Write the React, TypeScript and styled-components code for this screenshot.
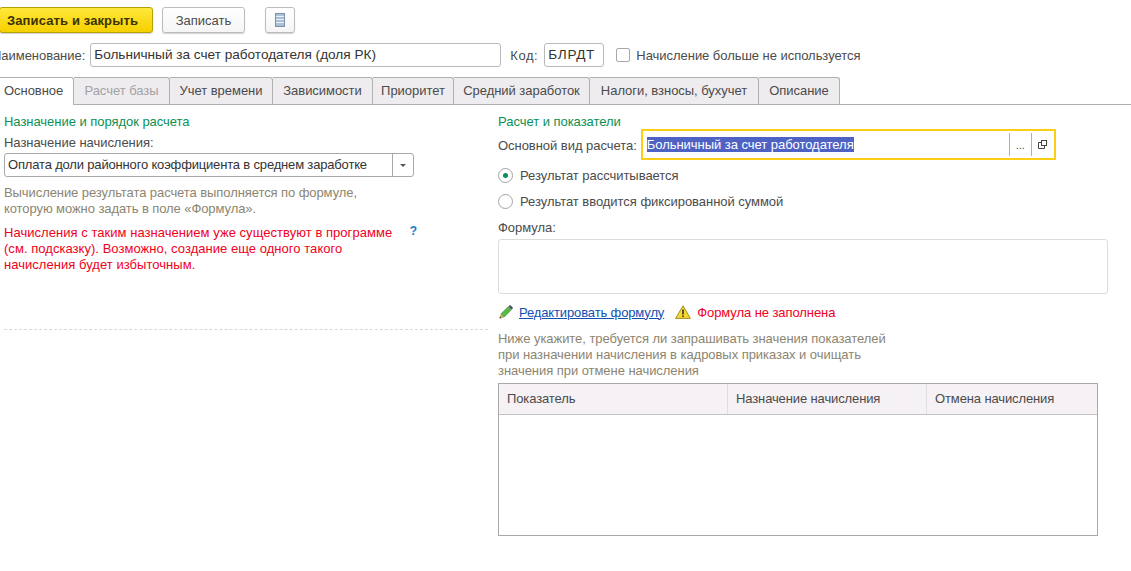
import React from 'react';
import styled, { createGlobalStyle } from 'styled-components';

const GlobalStyle = createGlobalStyle`
  html, body {
    margin: 0;
    padding: 0;
    background: #fff;
    overflow: hidden;
  }
  body {
    font-family: "Liberation Sans", Arial, sans-serif;
    font-size: 13px;
    letter-spacing: -0.04px;
    color: #4b4b4b;
  }
`;

const Page = styled.div`
  width: 1131px;
  height: 571px;
  overflow: hidden;
`;

const Toolbar = styled.div`
  display: flex;
  align-items: center;
  height: 26px;
  padding-top: 7px;
  margin-left: -1px;
`;

const Button = styled.button<{ $primary?: boolean }>`
  height: 26px;
  box-sizing: border-box;
  border-radius: 3px;
  font-family: inherit;
  font-size: 13px;
  padding: 0 ${(p) => (p.$primary ? '7px' : '0')} 0 0;
  letter-spacing: ${(p) => (p.$primary ? '0.12px' : '0')};
  color: ${(p) => (p.$primary ? '#3b3200' : '#4b4b4b')};
  font-weight: ${(p) => (p.$primary ? 'bold' : 'normal')};
  width: ${(p) => (p.$primary ? '154px' : '83px')};
  margin-right: ${(p) => (p.$primary ? '9px' : '20px')};
  border: 1px solid ${(p) => (p.$primary ? '#b8a000' : '#bcbcbc')};
  background: ${(p) =>
    p.$primary ? 'linear-gradient(#ffe83c, #f6d000)' : 'linear-gradient(#fff, #f5f5f5)'};
  box-shadow: 0 1px 1px rgba(0, 0, 0, 0.18);
`;

const IconButton = styled(Button)`
  width: 30px;
  margin: 0;
  display: flex;
  align-items: center;
  justify-content: center;
`;

const NameRow = styled.div`
  display: flex;
  align-items: center;
  height: 24px;
  margin: 10px 0 10px -8px;
`;

const Label = styled.span<{ $ml?: number; $spread?: number }>`
  white-space: nowrap;
  color: #4b4b4b;
  margin-left: ${(p) => p.$ml ?? 0}px;
  letter-spacing: ${(p) => p.$spread ?? -0.04}px;
`;

const Input = styled.div<{ $w: number; $ml: number; $spread?: number }>`
  box-sizing: border-box;
  width: ${(p) => p.$w}px;
  height: 24px;
  margin-left: ${(p) => p.$ml}px;
  border: 1px solid #b9b9b9;
  border-radius: 3px;
  padding-left: 3px;
  font-size: 13.6px;
  letter-spacing: ${(p) => p.$spread ?? 0}px;
  line-height: 22px;
  color: #333;
  white-space: nowrap;
  overflow: hidden;
`;

const CheckBox = styled.span`
  box-sizing: border-box;
  width: 14px;
  height: 14px;
  margin: 0 6px 0 12px;
  border: 1px solid #a8a8a8;
  border-radius: 2px;
`;

const TabStrip = styled.div`
  display: flex;
  height: 28px;
  box-sizing: border-box;
  border-bottom: 1px solid #b0b0b0;
`;

const Tab = styled.div<{ $w: number; $active?: boolean; $disabled?: boolean }>`
  box-sizing: border-box;
  width: ${(p) => p.$w}px;
  height: ${(p) => (p.$active ? '28px' : '27px')};
  text-align: ${(p) => (p.$active ? 'left' : 'center')};
  padding-left: ${(p) => (p.$active ? '4px' : '0')};
  line-height: 26px;
  border: 1px solid #b0b0b0;
  border-left: 0;
  border-bottom: 0;
  border-radius: 0 3px 0 0;
  background: ${(p) => (p.$active ? '#fff' : '#efecef')};
  color: ${(p) => (p.$disabled ? '#a3a3a3' : '#4b4b4b')};
  white-space: nowrap;
`;

const Columns = styled.div`
  display: flex;
  padding: 9px 0 0 4px;
`;

const LeftColumn = styled.div`
  width: 484px;
  margin-right: 10px;
`;

const RightColumn = styled.div`
  width: 610px;
`;

const Heading = styled.div`
  color: #0b9055;
  line-height: 16px;
`;

const FieldCaption = styled.div<{ $mt: number }>`
  line-height: 16px;
  margin-top: ${(p) => p.$mt}px;
`;

const Select = styled.div`
  display: flex;
  box-sizing: border-box;
  width: 410px;
  height: 24px;
  margin-top: 2px;
  border: 1px solid #a9a9a9;
  border-radius: 3px;
  line-height: 22px;
  color: #333;
`;

const SelectText = styled.span`
  flex: 1;
  padding-left: 3px;
  letter-spacing: -0.17px;
`;

const SelectArrow = styled.span`
  width: 20px;
  border-left: 1px solid #a9a9a9;
  display: flex;
  align-items: center;
  justify-content: center;

  &::after {
    content: '';
    border: 3px solid transparent;
    border-top: 3px solid #555;
    border-bottom: 0;
  }
`;

const Hint = styled.div<{ $mt?: number; $tight?: boolean }>`
  color: #8c8571;
  line-height: 16px;
  margin-top: ${(p) => p.$mt ?? 0}px;
  letter-spacing: ${(p) => (p.$tight ? '-0.08px' : '-0.05px')};
`;

const WarnBlock = styled.div`
  display: flex;
  justify-content: space-between;
  width: 413px;
  margin-top: 8px;
`;

const RedText = styled.div`
  color: #f0001c;
  line-height: 16px;
  letter-spacing: 0.04px;
`;

const Help = styled.span`
  color: #1c78c0;
  font-weight: bold;
  font-size: 12px;
  line-height: 12px;
`;

const Dashed = styled.div`
  margin-top: 56px;
  border-top: 1px dashed #d8d8d8;
`;

const BaseRow = styled.div`
  display: flex;
  align-items: center;
`;

const FocusField = styled.div`
  display: flex;
  align-items: center;
  box-sizing: border-box;
  width: 415px;
  height: 31px;
  margin: -1px 0 0 4px;
  padding: 0 0 0 4px;
  border: 2px solid #fccf14;
`;

const Selected = styled.span`
  flex: 1;
`;

const SelectedText = styled.span`
  background: #4e62c4;
  color: #fff;
  line-height: 15px;
  display: inline-block;
`;

const FieldAction = styled.span<{ $w: number }>`
  width: ${(p) => p.$w}px;
  height: 23px;
  border-left: 1px solid #b0b0b0;
  font-size: 11px;
  display: flex;
  align-items: center;
  justify-content: center;
`;

const RadioRow = styled.div<{ $mt?: number }>`
  display: flex;
  align-items: center;
  height: 26px;
  margin-top: ${(p) => p.$mt ?? 0}px;
`;

const Radio = styled.span<{ $on?: boolean }>`
  box-sizing: border-box;
  width: 15px;
  height: 15px;
  margin-right: 7px;
  border: 1px solid #a4a4a4;
  border-radius: 50%;
  display: flex;
  align-items: center;
  justify-content: center;

  &::after {
    content: '';
    width: 5px;
    height: 5px;
    border-radius: 50%;
    background: ${(p) => (p.$on ? '#0b9055' : 'transparent')};
  }
`;

const FormulaBox = styled.div`
  box-sizing: border-box;
  height: 55px;
  margin-top: 3px;
  border: 1px solid #dcdcdc;
  border-radius: 3px;
`;

const LinkRow = styled.div`
  display: flex;
  align-items: center;
  height: 18px;
  margin: 9px 0 0 1px;
`;

const EditLink = styled.a`
  color: #0f4fb5;
  text-decoration: underline;
  margin: 0 11px 0 6px;
  letter-spacing: -0.13px;
`;

const WarnText = styled.span`
  color: #f0001c;
  margin-left: 6px;
  letter-spacing: -0.08px;
`;

const Table = styled.div`
  box-sizing: border-box;
  width: 600px;
  height: 153px;
  margin-top: 4px;
  border: 1px solid #a9a9a9;
`;

const TableHead = styled.div`
  display: grid;
  grid-template-columns: 229px 199px 1fr;
  height: 31px;
  box-sizing: border-box;
  border-bottom: 1px solid #c4c4c4;
  background: #f5f1f5;
`;

const HeadCell = styled.div`
  padding-left: 8px;
  line-height: 30px;
  letter-spacing: -0.12px;
  border-right: 1px solid #dedede;

  &:last-child {
    border-right: 0;
  }
`;

const tabs = [
  { title: 'Основное', w: 74, active: true },
  { title: 'Расчет базы', w: 96, disabled: true },
  { title: 'Учет времени', w: 103 },
  { title: 'Зависимости', w: 100 },
  { title: 'Приоритет', w: 81 },
  { title: 'Средний заработок', w: 136 },
  { title: 'Налоги, взносы, бухучет', w: 169 },
  { title: 'Описание', w: 81 },
];

function ListIcon() {
  return (
    <svg width="10" height="14" viewBox="0 0 10 14">
      <rect x="0.5" y="0.5" width="9" height="13" fill="#a9c0d8" stroke="#7d92a8" />
      <path d="M1 3.5h8M1 6.5h8M1 9.5h8" stroke="#eaf0f6" strokeWidth="1" />
    </svg>
  );
}

function PencilIcon() {
  return (
    <svg width="14" height="14" viewBox="0 0 14 14">
      <path d="M.5 13.5l1-4.2 3.2 3.2z" fill="#d8a868" />
      <path d="M.5 13.5l.5-2 1.5 1.5z" fill="#333" />
      <path d="M1.8 9L9 1.8l3.2 3.2L5 12.2z" fill="#58b848" stroke="#3f8a34" strokeWidth="0.6" />
      <path d="M9.3 1.5l1-1a1 1 0 0 1 1.4 0l1.8 1.8a1 1 0 0 1 0 1.4l-1 1z" fill="#46525c" />
    </svg>
  );
}

function WarningIcon() {
  return (
    <svg width="16" height="14" viewBox="0 0 16 14">
      <path d="M8 .8L15.4 13.4H.6z" fill="#f6d82f" stroke="#a68f1e" strokeWidth="1" />
      <path d="M8 4.5v5M8 10.5v1.6" stroke="#333" strokeWidth="1.6" />
    </svg>
  );
}

function OpenIcon() {
  return (
    <svg width="9" height="9" viewBox="0 0 9 9" fill="none" stroke="#444">
      <rect x="3.5" y="0.5" width="5" height="5" />
      <path d="M3 2.5H.5v6h6V6" />
    </svg>
  );
}

export default function App() {
  return (
    <Page>
      <GlobalStyle />
      <Toolbar>
        <Button $primary>Записать и закрыть</Button>
        <Button>Записать</Button>
        <IconButton>
          <ListIcon />
        </IconButton>
      </Toolbar>
      <NameRow>
        <Label>Наименование:</Label>
        <Input $w={411} $ml={5}>Больничный за счет работодателя (доля РК)</Input>
        <Label $ml={9} $spread={0.6}>Код:</Label>
        <Input $w={60} $ml={6} $spread={0.6}>БЛРДТ</Input>
        <CheckBox />
        <Label>Начисление больше не используется</Label>
      </NameRow>
      <TabStrip>
        {tabs.map((t) => (
          <Tab key={t.title} $w={t.w} $active={t.active} $disabled={t.disabled}>
            {t.title}
          </Tab>
        ))}
      </TabStrip>
      <Columns>
        <LeftColumn>
          <Heading>Назначение и порядок расчета</Heading>
          <FieldCaption $mt={5}>Назначение начисления:</FieldCaption>
          <Select>
            <SelectText>Оплата доли районного коэффициента в среднем заработке</SelectText>
            <SelectArrow />
          </Select>
          <Hint $mt={8} $tight>
            Вычисление результата расчета выполняется по формуле,
            <br />
            которую можно задать в поле «Формула».
          </Hint>
          <WarnBlock>
            <RedText>
              Начисления с таким назначением уже существуют в программе
              <br />
              (см. подсказку). Возможно, создание еще одного такого
              <br />
              начисления будет избыточным.
            </RedText>
            <Help>?</Help>
          </WarnBlock>
          <Dashed />
        </LeftColumn>
        <RightColumn>
          <Heading>Расчет и показатели</Heading>
          <BaseRow>
            <Label>Основной вид расчета:</Label>
            <FocusField>
              <Selected>
                <SelectedText>Больничный за счет работодателя</SelectedText>
              </Selected>
              <FieldAction $w={21}>...</FieldAction>
              <FieldAction $w={22}>
                <OpenIcon />
              </FieldAction>
            </FocusField>
          </BaseRow>
          <RadioRow $mt={2}>
            <Radio $on />
            Результат рассчитывается
          </RadioRow>
          <RadioRow>
            <Radio />
            Результат вводится фиксированной суммой
          </RadioRow>
          <FieldCaption $mt={6}>Формула:</FieldCaption>
          <FormulaBox />
          <LinkRow>
            <PencilIcon />
            <EditLink>Редактировать формулу</EditLink>
            <WarningIcon />
            <WarnText>Формула не заполнена</WarnText>
          </LinkRow>
          <Hint $mt={10}>
            Ниже укажите, требуется ли запрашивать значения показателей
            <br />
            при назначении начисления в кадровых приказах и очищать
            <br />
            значения при отмене начисления
          </Hint>
          <Table>
            <TableHead>
              <HeadCell>Показатель</HeadCell>
              <HeadCell>Назначение начисления</HeadCell>
              <HeadCell>Отмена начисления</HeadCell>
            </TableHead>
          </Table>
        </RightColumn>
      </Columns>
    </Page>
  );
}
